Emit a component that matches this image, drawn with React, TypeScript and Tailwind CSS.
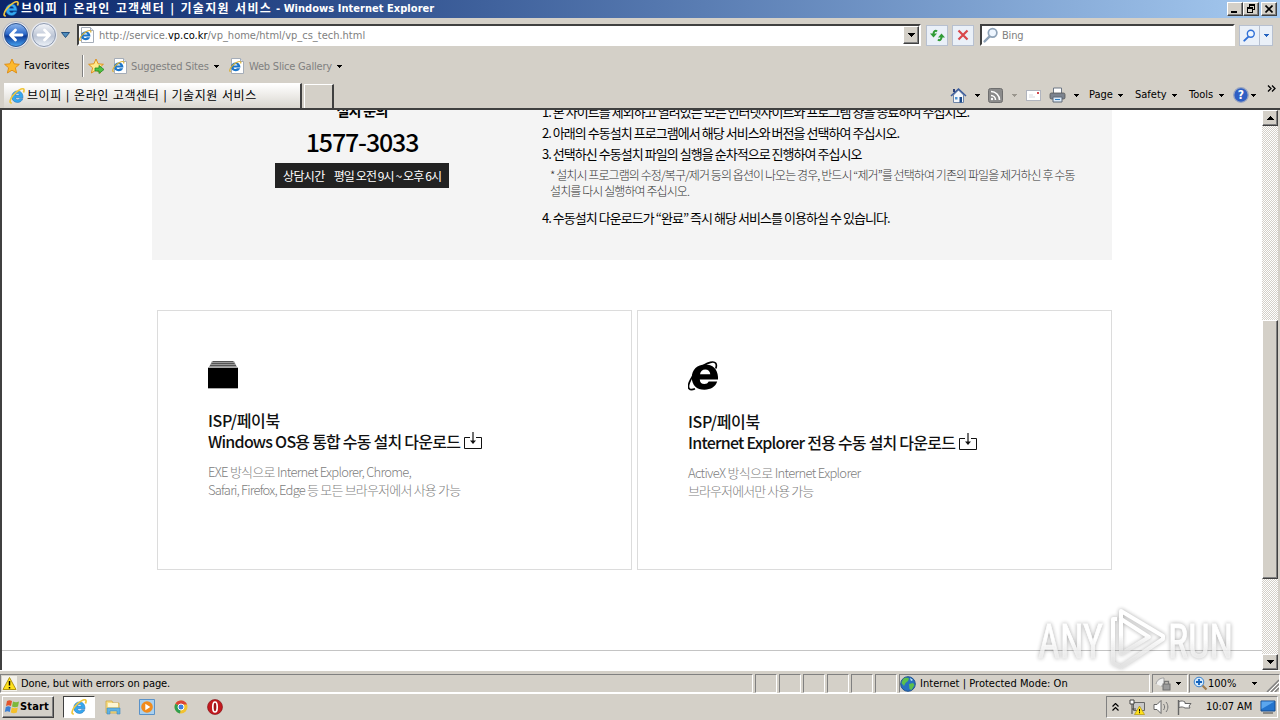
import type { ReactNode } from 'react';
import { clsx } from 'clsx';

const raised = 'border border-t-white border-l-white border-r-[#404040] border-b-[#404040] bg-[#d4d0c8] shadow-[inset_-1px_-1px_0_#808080]';
const sunken = 'border border-t-[#808080] border-l-[#808080] border-r-white border-b-white';

function Caret({ className = 'text-black' }: { className?: string }) {
    return (
        <svg width="5" height="3" viewBox="0 0 5 3" className={clsx('shrink-0', className)} shapeRendering="crispEdges">
            <path d="M0 0h5L2.5 3z" fill="currentColor" />
        </svg>
    );
}

function IeLogo({ size = 16 }: { size?: number }) {
    return (
        <svg width={size} height={size} viewBox="0 0 16 16" className="shrink-0">
            <path
                d="M14 9.800H6.400c.2 1.200 1 1.900 2.200 1.900.9 0 1.600-.3 2-1h3.200c-.8 2.300-2.700 3.800-5.300 3.800-3.300 0-5.700-2.400-5.700-5.700s2.400-5.900 5.700-5.900c3.400 0 5.600 2.600 5.500 6.900zM6.400 7.300h4.200C10.400 6.200 9.600 5.600 8.500 5.600S6.600 6.200 6.400 7.300z"
                fill="#35a8ef"
                stroke="#1566b4"
                strokeWidth=".5"
            />
            <path d="M2.800 14.700C.2 15.400.6 11.800 3.700 7.800 7.200 3.200 13.500-.6 14.800 1.300c.5.8.2 2-.4 3.200" fill="none" stroke="#f0c63c" strokeWidth="1.700" />
        </svg>
    );
}

function PageIcon() {
    return (
        <svg width="16" height="16" viewBox="0 0 16 16" className="shrink-0">
            <path d="M2.500.5h9l3 3v12h-12z" fill="#fff" stroke="#a5adb8" />
            <path d="M11.500.5v3h3" fill="#dde4ee" stroke="#a5adb8" />
            <path
                d="M11.500 9.400H4.600c.2 1.300.9 1.700 1.800 1.700.7 0 1.200-.3 1.500-.8h3.200c-.6 1.800-2.200 2.900-4.500 2.900-2.800 0-4.600-1.800-4.600-4.400s1.900-4.400 4.600-4.400c3 0 4.900 1.900 4.900 5zM4.700 7.500h3.800C8.300 6.700 7.600 6.200 6.600 6.200s-1.700.5-1.900 1.300z"
                fill="#1c76c9"
            />
            <path d="M1.800 13.500c-1.800.2-1.300-2.500 1-5.200 2.400-3 7.200-5.700 8.700-4.500.5.4.4 1.100.1 1.800" fill="none" stroke="#d8b13a" strokeWidth="1.200" />
        </svg>
    );
}

function Star({ add = false }: { add?: boolean }) {
    return (
        <svg width="17" height="17" viewBox="0 0 17 17" className="shrink-0">
            <path
                d="M8 1l2.100 4.800 5.300.5-4 3.500 1.200 5.200L8 12.200 3.400 15l1.200-5.200-4-3.500 5.300-.5z"
                fill={add ? '#ffe98a' : '#fdb92c'}
                stroke="#dd8a12"
                strokeWidth=".9"
                strokeLinejoin="round"
            />
            {add && <path d="M7 10h4V7.500l5 4-5 4V13H7z" fill="#4fc145" stroke="#258b22" strokeWidth=".8" />}
        </svg>
    );
}

function NavArrow({ back = false }: { back?: boolean }) {
    return (
        <svg width="26" height="26" viewBox="0 0 26 26" className="shrink-0">
            <defs>
                <linearGradient id="back" x1="0" y1="0" x2="0" y2="1">
                    <stop offset="0" stopColor="#8fb8ee" />
                    <stop offset=".45" stopColor="#2f6bcb" />
                    <stop offset=".55" stopColor="#0d3b9a" />
                    <stop offset="1" stopColor="#49a6f2" />
                </linearGradient>
                <linearGradient id="fwd" x1="0" y1="0" x2="0" y2="1">
                    <stop offset="0" stopColor="#f4f6fa" />
                    <stop offset=".55" stopColor="#bcc5d5" />
                    <stop offset="1" stopColor="#eef3fa" />
                </linearGradient>
            </defs>
            <circle cx="13" cy="13" r="11.500" fill={back ? 'url(#back)' : 'url(#fwd)'} stroke={back ? '#31548f' : '#8d99af'} />
            <path
                d={back ? 'M19 13H8M12.500 8L7.500 13l5 5' : 'M7 13h11M13.500 8l5 5-5 5'}
                fill="none"
                stroke="#fff"
                strokeWidth="2.800"
                strokeLinecap="round"
                strokeLinejoin="round"
            />
        </svg>
    );
}

function Magnifier({ color = '#2f6fd6', size = 15 }: { color?: string; size?: number }) {
    return (
        <svg width={size} height={size} viewBox="0 0 15 15" className="shrink-0">
            <path d="M1.500 13.500L6 9" stroke={color} strokeWidth="2.200" strokeLinecap="round" />
            <circle cx="9" cy="5.500" r="4" fill="#eef6ff" stroke={color} strokeWidth="1.600" />
        </svg>
    );
}

function TitleBar() {
    return (
        <div className="flex h-[18px] items-center bg-gradient-to-r from-[#0a246a] to-[#a6caf0] pl-[3px] pr-[3px] text-white">
            <IeLogo size={16} />
            <span className="ml-[2px] w-[252px] whitespace-nowrap text-[12px] font-bold tracking-[1.32px]">브이피 | 온라인 고객센터 | 기술지원 서비스</span>
            <span className="ml-[3px] whitespace-nowrap text-[11px] font-bold tracking-[0.04px]">- Windows Internet Explorer</span>
            <div className="ml-auto flex">
                <div className={clsx(raised, 'flex h-[14px] w-[16px] items-end justify-center pb-[2px]')}>
                    <div className="mr-[2px] h-[2px] w-[6px] bg-black" />
                </div>
                <div className={clsx(raised, 'flex h-[14px] w-[16px] items-center justify-center')}>
                    <svg width="10" height="10" viewBox="0 0 10 10" shapeRendering="crispEdges">
                        <path d="M3 0h6v6H7V5h1V2H4v1H3zM1 3h6v6H1zM2 5v3h4V5z" fillRule="evenodd" />
                    </svg>
                </div>
                <div className={clsx(raised, 'ml-[2px] flex h-[14px] w-[16px] items-center justify-center')}>
                    <svg width="8" height="8" viewBox="0 0 8 8">
                        <path d="M.5.5l7 7M7.500.5l-7 7" stroke="#000" strokeWidth="1.600" />
                    </svg>
                </div>
            </div>
        </div>
    );
}

function ToolButton({ children, className }: { children: ReactNode; className?: string }) {
    return (
        <div className={clsx('flex h-[21px] items-center justify-center border border-[#b7c0d0] bg-[#eaf0f8]', className)}>
            {children}
        </div>
    );
}

function AddressBar() {
    return (
        <div className="flex h-[34px] items-center bg-[#d4d0c8] pl-[3px] text-[11px]">
            <div className="flex rounded-full bg-[#e8ebf2] outline outline-[#b4b8c4]">
                <NavArrow back />
            </div>
            <div className="ml-[2px] flex rounded-full bg-[#e8ebf2]">
                <NavArrow />
            </div>
            <svg width="9" height="6" viewBox="0 0 9 6" className="ml-[4px]">
                <path d="M.5.5h8l-4 5z" fill="#4d8bbd" stroke="#24507e" />
            </svg>
            <div className="ml-[7px] flex h-[22px] w-[844px] items-center border-2 border-t-[#404040] border-l-[#404040] border-r-white border-b-white bg-white">
                <PageIcon />
                <span className="ml-[4px] grow whitespace-nowrap pt-[2px] tracking-[0px] text-[#808080]">
                    http://service.<span className="text-black">vp.co.kr</span>/vp_home/html/vp_cs_tech.html
                </span>
                <div className={clsx(raised, 'flex h-[18px] w-[16px] items-center justify-center')}>
                    <svg width="7" height="4" viewBox="0 0 7 4" shapeRendering="crispEdges"><path d="M0 0h7L3.500 4z" /></svg>
                </div>
            </div>
            <ToolButton className="ml-[5px] w-[22px]">
                <svg width="17" height="15" viewBox="0 0 17 15">
                    <path d="M8 3.500C6.500 2 4.500 3 4.500 6" fill="none" stroke="#2f9b35" strokeWidth="2" />
                    <path d="M1 5.500h7L4.500 9.500z" fill="#2f9b35" />
                    <path d="M9 11.500c1.500 1.500 3.500.5 3.500-2.500" fill="none" stroke="#2f9b35" strokeWidth="2" />
                    <path d="M9 9.500h7L12.500 5.500z" fill="#2f9b35" />
                </svg>
            </ToolButton>
            <ToolButton className="ml-[4px] w-[22px]">
                <svg width="12" height="12" viewBox="0 0 12 12"><path d="M1.500 1.500l9 9M10.500 1.500l-9 9" stroke="#d9474b" strokeWidth="2.200" /></svg>
            </ToolButton>
            <div className="ml-[6px] flex h-[22px] w-[255px] items-center border-2 border-t-[#404040] border-l-[#404040] border-r-white border-b-white bg-white pl-px text-[#808080]">
                <Magnifier color="#8fa3b8" size={16} />
                <span className="ml-[3px] pt-[2px] tracking-[-0.2px]">Bing</span>
            </div>
            <ToolButton className="ml-[4px] w-[21px]"><Magnifier size={13} /></ToolButton>
            <ToolButton className="-ml-px w-[14px]"><Caret className="text-[#2563c0]" /></ToolButton>
        </div>
    );
}

function FavoritesBar() {
    return (
        <div className="flex h-[28px] items-center bg-[#d4d0c8] pl-[4px] text-[11px]">
            <Star />
            <span className="ml-[3px] w-[46px] whitespace-nowrap pt-px tracking-[0.1px]">Favorites</span>
            <div className="ml-[12px] h-[22px] w-[2px] border-l border-[#808080] bg-white" />
            <div className="ml-[4px] flex"><Star add /></div>
            <div className="ml-[7px] flex"><PageIcon /></div>
            <span className="ml-[3px] w-[78px] whitespace-nowrap pt-[2px] tracking-[-0.15px] text-[#808080]">Suggested Sites</span>
            <div className="ml-[5px] flex"><Caret /></div>
            <div className="ml-[10px] flex"><PageIcon /></div>
            <span className="ml-[4px] w-[82px] whitespace-nowrap pt-[2px] tracking-[-0.2px] text-[#808080]">Web Slice Gallery</span>
            <div className="ml-[6px] flex"><Caret /></div>
        </div>
    );
}

function HomeIcon() {
    return (
        <svg width="17" height="17" viewBox="0 0 17 17" className="shrink-0">
            <path d="M3.500 8v7.500h10V8l-5-5z" fill="#f5f8fc" stroke="#7087a8" />
            <path d="M1 9l7.500-7L16 9" fill="none" stroke="#3b5c9c" strokeWidth="1.600" />
            <path d="M3 2h2v3H3z" fill="#2b3f78" />
            <path d="M9.500 10h2.500v5.500H9.500z" fill="#1c4b8c" />
            <path d="M5 10h2.500v2.500H5z" fill="#4f94d4" />
        </svg>
    );
}

function CommandBar() {
    return (
        <div className="flex h-[28px] border-b-2 border-[#404040] bg-[#d4d0c8] pl-[4px] pr-[4px]">
            <div className="mt-px flex h-[25px] w-[298px] items-center border-r-2 border-t border-r-[#404040] border-t-white bg-gradient-to-b from-white to-[#d9d6cf] pl-[5px]">
                <IeLogo size={16} />
                <span className="ml-[2px] whitespace-nowrap text-[12px] tracking-[0.57px]">브이피 | 온라인 고객센터 | 기술지원 서비스</span>
            </div>
            <div className="ml-[2px] mt-[2px] h-[24px] w-[30px] border-l border-r-2 border-t border-l-white border-r-[#404040] border-t-white" />
            <div className="ml-auto flex items-center text-[11px]">
                <HomeIcon />
                <div className="ml-[8px] flex"><Caret /></div>
                <svg width="15" height="15" viewBox="0 0 15 15" className="ml-[8px]">
                    <rect x=".5" y=".5" width="14" height="14" rx="2" fill="#8b8b8b" stroke="#6e6e6e" />
                    <path d="M3 7.500A4.500 4.500 0 0 1 7.500 12M3 3.500A8.500 8.500 0 0 1 11.500 12" fill="none" stroke="#fff" strokeWidth="1.600" />
                    <circle cx="4" cy="11" r="1.200" fill="#fff" />
                </svg>
                <div className="ml-[9px] flex"><Caret className="text-[#9a968e]" /></div>
                <svg width="15" height="11" viewBox="0 0 15 11" className="ml-[9px]">
                    <rect x=".5" y=".5" width="14" height="10" fill="#fff" stroke="#b0b4be" />
                    <rect x="11" y="2" width="2" height="2" fill="#d3484e" />
                    <path d="M3 7h6M3 5h4" stroke="#d4d7de" />
                </svg>
                <svg width="17" height="16" viewBox="0 0 17 16" className="ml-[8px]">
                    <path d="M4.500 6V1h8v5" fill="#fff" stroke="#6c7684" />
                    <rect x="1" y="6" width="15" height="6" rx="1.500" fill="#7c838e" stroke="#555" strokeWidth=".8" />
                    <path d="M4 10h9v5H4z" fill="#dcebfa" stroke="#5f6976" />
                    <path d="M6 12.500h5" stroke="#2f7fc2" />
                </svg>
                <div className="ml-[8px] flex"><Caret /></div>
                <span className="ml-[10px] w-[25px] whitespace-nowrap">Page</span>
                <div className="ml-[4px] flex"><Caret /></div>
                <span className="ml-[12px] w-[32px] whitespace-nowrap">Safety</span>
                <div className="ml-[5px] flex"><Caret /></div>
                <span className="ml-[12px] w-[26px] whitespace-nowrap">Tools</span>
                <div className="ml-[4px] flex"><Caret /></div>
                <svg width="16" height="16" viewBox="0 0 16 16" className="ml-[9px]">
                    <circle cx="8" cy="8" r="7.300" fill="#2f5fc4" stroke="#9aa6c0" strokeWidth="1.300" />
                    <text x="8" y="12.200" textAnchor="middle" fontSize="12" fontWeight="700" fill="#fff">?</text>
                </svg>
                <div className="ml-[2px] flex"><Caret /></div>
                <svg width="9" height="7" viewBox="0 0 9 7" className="mb-[13px] ml-[11px]">
                    <path d="M1 .5l3 3-3 3M5 .5l3 3-3 3" fill="none" stroke="#000" strokeWidth="1.300" />
                </svg>
            </div>
        </div>
    );
}

function DownloadIcon() {
    return (
        <svg width="18" height="17" viewBox="0 0 18 17" className="mb-[3px] ml-[4px]">
            <path d="M6 5.500H.5v11h17v-11H12" fill="none" stroke="#111" />
            <path d="M9 0v10" stroke="#111" strokeWidth="1.200" />
            <path d="M6 8.500h6l-3 3.500z" fill="#111" />
        </svg>
    );
}

function BlackIeLogo() {
    return (
        <svg width="30" height="30" viewBox="0 0 30 30">
            <path
                fillRule="evenodd"
                d="M30 18.500H11.800c.1 2.900 1.800 4.600 4.600 4.600 2 0 3.500-.8 4.300-2.500h8.500c-1.600 5-6.300 8.200-12.800 8.200C8.700 28.800 3.800 24 3.800 16.500 3.800 8.600 9.300 3.500 17.200 3.500 25.400 3.500 30.500 9 30 18.500zM12 13.300h10.300c-.3-3-2.200-4.700-5-4.700-2.900 0-4.800 1.700-5.300 4.700z"
            />
            <path d="M7 27.800c-5.500 2.400-8-.3-5.600-6.400C4.600 13 14 3.400 22.500 1.300c5.300-1.300 6.800 1.700 5.300 6.300" fill="none" stroke="#000" strokeWidth="1.700" />
        </svg>
    );
}

interface DownloadCardProps {
    icon: ReactNode;
    title: string;
    lines: ReactNode;
    className: string;
}

function DownloadCard({ icon, title, lines, className }: DownloadCardProps) {
    return (
        <div className={clsx('h-[260px] w-[475px] border border-[#dcdcdc] pl-[50px]', className)}>
            {icon}
            <h3 className="whitespace-nowrap text-[16px] font-medium leading-[21px] text-[#111]">
                <span className="block tracking-[-0.35px]">ISP/페이북</span>
                <span className="flex h-[21px] items-end">
                    <span className="tracking-[-0.77px]">{title}</span>
                    <DownloadIcon />
                </span>
            </h3>
            <p className="mt-[11px] whitespace-nowrap text-[13px] font-light leading-[18px] text-[#808080]">{lines}</p>
        </div>
    );
}

function WebPage() {
    return (
        <div className="flex h-[560px] grow flex-col overflow-hidden bg-white pl-[150px] font-['Noto_Sans_CJK_KR',sans-serif]">
            <section className="flex h-[150px] w-[960px] shrink-0 bg-[#f4f4f4]">
                <div className="-mt-[10px] flex w-[420px] flex-col items-center">
                    <span className="text-[14px] font-bold leading-[20px] tracking-[-0.7px]">설치 문의</span>
                    <span className="mt-[5px] text-[25px] font-medium leading-[32px] tracking-[-1.15px]">1577-3033</span>
                    <span className="mt-[6px] flex h-[25px] w-[174px] items-center justify-center gap-[9px] whitespace-nowrap bg-[#222] text-[12px] tracking-[-0.9px] text-white">
                        <span className="tracking-[-0.6px]">상담시간</span>
                        <span>평일 오전 9시 ~ 오후 6시</span>
                    </span>
                </div>
                <ol className="-mt-[9px] ml-[-30px] whitespace-nowrap text-[13px] leading-[21px] tracking-[-0.96px] text-black">
                    <li>1. 본 사이트를 제외하고 열려있는 모든 인터넷사이트와 프로그램 창을 종료하여 주십시오.</li>
                    <li>2. 아래의 수동설치 프로그램에서 해당 서비스와 버전을 선택하여 주십시오.</li>
                    <li>3. 선택하신 수동설치 파일의 실행을 순차적으로 진행하여 주십시오</li>
                    <li className="mt-[3px] pl-[8px] text-[12px] font-light leading-[16px] tracking-[-0.91px] text-[#333]">
                        * 설치시 프로그램의 수정/복구/제거 등의 옵션이 나오는 경우, 반드시 “제거”를 선택하여 기존의 파일을 제거하신 후 수동
                        <br />
                        설치를 다시 실행하여 주십시오.
                    </li>
                    <li className="mt-[8px]">4. 수동설치 다운로드가 “완료” 즉시 해당 서비스를 이용하실 수 있습니다.</li>
                </ol>
            </section>
            <section className="mt-[50px] flex gap-[5px] pl-[5px]">
                <DownloadCard
                    className="pt-[50px]"
                    icon={
                        <svg width="30" height="28" viewBox="0 0 30 28" className="mb-[21px]">
                            <path d="M4 0h22l3 6H1z" fill="#999" />
                            <path d="M5 .5h20M3.500 2.500h23M2 4.500h26" stroke="#555" />
                            <path d="M0 6h30v22H0z" fill="#aaa" />
                            <path d="M0 7h30v20H0z" />
                        </svg>
                    }
                    title="Windows OS용 통합 수동 설치 다운로드"
                    lines={
                        <>
                            <span className="block tracking-[-0.73px]">EXE 방식으로 Internet Explorer, Chrome,</span>
                            <span className="block tracking-[-0.8px]">Safari, Firefox, Edge 등 모든 브라우저에서 사용 가능</span>
                        </>
                    }
                />
                <DownloadCard
                    className="pt-[50px]"
                    icon={<div className="mb-[20px] h-[30px]"><BlackIeLogo /></div>}
                    title="Internet Explorer 전용 수동 설치 다운로드"
                    lines={
                        <>
                            <span className="block tracking-[-0.7px]">ActiveX 방식으로 Internet Explorer</span>
                            <span className="block tracking-[-0.92px]">브라우저에서만 사용 가능</span>
                        </>
                    }
                />
            </section>
            <div className="-ml-[150px] mt-[80px] border-t border-[#c4c4c4]" />
        </div>
    );
}

function ScrollBar() {
    return (
        <div className="flex h-[560px] w-[16px] shrink-0 flex-col bg-[repeating-conic-gradient(#d4d0c8_0_25%,#fff_0_50%)] bg-[length:2px_2px]">
            <div className={clsx(raised, 'flex h-[16px] items-center justify-center')}>
                <svg width="7" height="4" viewBox="0 0 7 4" shapeRendering="crispEdges"><path d="M3.500 0L7 4H0z" /></svg>
            </div>
            <div className={clsx(raised, 'mt-[194px] h-[259px]')} />
            <div className={clsx(raised, 'mt-auto flex h-[16px] items-center justify-center')}>
                <svg width="7" height="4" viewBox="0 0 7 4" shapeRendering="crispEdges"><path d="M0 0h7L3.500 4z" /></svg>
            </div>
        </div>
    );
}

function StatusBar() {
    return (
        <div className="flex h-[19px] bg-[#d4d0c8] text-[11px]">
            <div className={clsx(sunken, 'flex w-[753px] items-center gap-[4px] pl-px')}>
                <svg width="15" height="15" viewBox="0 0 15 15">
                    <path d="M0 0h15v15H0z" fill="#f3f1ea" />
                    <path d="M7.500 1.500l6.500 12H1z" fill="#ffe11a" stroke="#b09410" />
                    <path d="M7.500 5v4.500M7.500 11v1.500" stroke="#000" strokeWidth="1.500" />
                </svg>
                <span className="pt-px tracking-[-0.08px]">Done, but with errors on page.</span>
            </div>
            {[0, 1, 2, 3, 4, 5].map(i => (
                <div key={i} className={clsx(sunken, 'ml-[2px] w-[22px]')} />
            ))}
            <div className={clsx(sunken, 'ml-[2px] flex w-[251px] items-center')}>
                <svg width="16" height="16" viewBox="0 0 16 16">
                    <circle cx="8" cy="8" r="7.300" fill="#2770c0" stroke="#1f518e" />
                    <path d="M3 3c2-2 5-1.500 6-.5L8 5 5.500 7 4 10 1.500 7zM9 8l4-1 1.500 2-3 5-2-1z" fill="#5cc04b" />
                    <path d="M10 2l3 2-2 1z" fill="#cdeaf8" />
                </svg>
                <span className="ml-[4px] whitespace-nowrap pt-px tracking-[0.03px]">Internet | Protected Mode: On</span>
            </div>
            <div className={clsx(sunken, 'ml-[2px] flex w-[36px] items-center')}>
                <svg width="16" height="15" viewBox="0 0 16 15" className="ml-[2px]">
                    <path d="M1 8c1-4 4-6 8-6v8H6" fill="#f0f0f0" stroke="#a0a0a0" />
                    <rect x="8" y="8" width="7" height="6" fill="#9b9b9b" stroke="#6f6f6f" />
                    <path d="M9.500 8V5.500h4V8" fill="none" stroke="#777" strokeWidth="1.300" />
                </svg>
                <div className="ml-[5px] flex"><Caret /></div>
            </div>
            <div className={clsx(sunken, 'ml-px flex w-[91px] items-center pl-[3px]')}>
                <svg width="15" height="15" viewBox="0 0 15 15">
                    <path d="M9 9l4.500 4.500" stroke="#a07c50" strokeWidth="2.200" />
                    <circle cx="6" cy="6" r="4.800" fill="#d5e9fb" stroke="#3b82cc" />
                    <path d="M6 3v6M3 6h6" stroke="#1664bd" strokeWidth="1.800" />
                </svg>
                <span className="w-[32px] pt-px tracking-[0px]">100%</span>
                <div className="ml-[12px] flex"><Caret /></div>
                <svg width="13" height="13" viewBox="0 0 13 13" className="ml-auto mt-[4px]">
                    <path d="M1 13L13 1M5 13l8-8M9 13l4-4" stroke="#808080" strokeWidth="1.500" />
                    <path d="M3 13L13 3M7 13l6-6" stroke="#fff" />
                </svg>
            </div>
        </div>
    );
}

function TaskBar() {
    return (
        <div className="flex h-[27px] items-center border-t border-white bg-[#d4d0c8] pl-[2px] text-[11px]">
            <div className={clsx(raised, 'flex h-[22px] w-[52px] items-center pl-px')}>
                <svg width="16" height="16" viewBox="0 0 16 16" className="shrink-0">
                    <path d="M3 2c2-1 3-1 5 0L7 7C5 6 4 6 2 7z" fill="#e2542c" />
                    <path d="M9 2.500c2 1 4 1 6 0L14 7.500c-2 1-4 1-6 0z" fill="#7cb83a" />
                    <path d="M1.800 8c2-1 3-1 5 0l-1 5c-2-1-3-1-5 0z" fill="#3a7fd4" />
                    <path d="M7.800 8.500c2 1 4 1 6 0l-1 5c-2 1-4 1-6 0z" fill="#f5c02a" />
                </svg>
                <span className="pt-px font-bold tracking-[0.15px]">Start</span>
            </div>
            <div className="ml-[9px] flex h-[22px] w-[32px] items-center justify-center border border-t-[#404040] border-l-[#404040] border-r-white border-b-white bg-white">
                <IeLogo size={16} />
            </div>
            <svg width="16" height="16" viewBox="0 0 16 16" className="ml-[10px]">
                <path d="M1 2h6l1 2h6v10H1z" fill="#f7dd84" stroke="#cfa945" strokeWidth=".8" />
                <path d="M3 4h10v4H3z" fill="#fdf6d2" />
                <path d="M2 9h13v6h-3v-3H5v3H2z" fill="#5eb3e4" stroke="#3c88bd" strokeWidth=".6" />
            </svg>
            <svg width="16" height="16" viewBox="0 0 16 16" className="ml-[18px]">
                <path d="M.5.5h15v15H.5z" fill="#a9d0ef" stroke="#5a92c8" />
                <circle cx="8" cy="8" r="5.800" fill="#f18b1c" />
                <path d="M6.300 4.800l5 3.200-5 3.200z" fill="#fff" />
            </svg>
            <svg width="14" height="14" viewBox="0 0 14 14" className="ml-[19px]">
                <circle cx="7" cy="7" r="6.500" fill="#f2c230" />
                <path d="M7 7L1.400 3.700A6.500 6.500 0 0 1 13 4.500H7z" fill="#dc4437" />
                <path d="M7 7l-1 6.400A6.500 6.500 0 0 1 1.400 3.700z" fill="#2f9e50" />
                <circle cx="7" cy="7" r="3" fill="#3f7fe0" stroke="#fff" />
            </svg>
            <svg width="16" height="16" viewBox="0 0 16 16" className="ml-[19px]">
                <circle cx="8" cy="8" r="7.500" fill="#c3191f" stroke="#7c0c10" strokeWidth=".6" />
                <ellipse cx="8" cy="8" rx="2.200" ry="5" fill="#a01218" stroke="#fff" strokeWidth="1.700" />
            </svg>
            <div className={clsx(sunken, 'ml-auto mr-[2px] flex h-[22px] w-[172px] items-center')}>
                <svg width="7" height="8" viewBox="0 0 7 8" className="ml-[5px]">
                    <path d="M.5 3.500l3-3 3 3M.5 7.500l3-3 3 3" fill="none" stroke="#000" strokeWidth="1.200" />
                </svg>
                <svg width="16" height="16" viewBox="0 0 16 16" className="ml-[10px]">
                    <path d="M4.500 3.500h11v8h-11z" fill="#c8c8c8" stroke="#666" />
                    <path d="M1 1h4v4H1zM3 5v10M3 10h4" fill="#fff" stroke="#444" />
                    <path d="M10.500 7l5 8.500h-10z" fill="#ffe11a" stroke="#b09410" strokeWidth=".7" />
                    <path d="M10.500 10v2.500M10.500 13.200v1" stroke="#000" />
                </svg>
                <svg width="17" height="16" viewBox="0 0 17 16" className="ml-[8px]">
                    <path d="M1 5.500h3l4-4v13l-4-4H1z" fill="#fff" stroke="#666" />
                    <path d="M10.500 5c1.500 2 1.500 4 0 6M13 3c2.500 3 2.500 7 0 10" fill="none" stroke="#777" />
                </svg>
                <svg width="16" height="16" viewBox="0 0 16 16" className="ml-[7px]">
                    <path d="M1.500 1v15" stroke="#666" strokeWidth="1.400" />
                    <path d="M2 2.500c3-1 4-.5 6 .5v1.500h6l-2 2.500 1 2H8C6 8 5 7.500 2 8.500z" fill="#fff" stroke="#666" />
                </svg>
                <span className="ml-[13px] w-[48px] whitespace-nowrap pt-px tracking-[-0.1px]">10:07 AM</span>
                <svg width="16" height="14" viewBox="0 0 16 14" className="ml-[6px] shrink-0">
                    <path d="M1 1h14v10H1z" fill="#2374ce" stroke="#164a8c" />
                    <path d="M1.500 1.500h13L1.500 9z" fill="#5ba6ee" />
                    <path d="M3 13h10" stroke="#444" />
                </svg>
            </div>
        </div>
    );
}

function Watermark() {
    return (
        <svg width="210" height="76" viewBox="0 0 210 76" className="absolute left-[1030px] top-[602px] opacity-90 drop-shadow-[0_0_2px_rgba(0,0,0,0.38)]">
            <defs>
                <linearGradient id="fade" x1="0" y1="0" x2="0" y2="1">
                    <stop offset="0" stopColor="#fff" />
                    <stop offset=".45" stopColor="#fff" />
                    <stop offset="1" stopColor="#e2e2e2" stopOpacity=".7" />
                </linearGradient>
            </defs>
            <g fill="url(#fade)" stroke="url(#fade)" strokeWidth=".8" fontFamily="Roboto, sans-serif" fontSize="48" fontWeight="400">
                <text x="8" y="56" textLength="65" lengthAdjust="spacingAndGlyphs">ANY</text>
                <text x="138" y="56" textLength="65" lengthAdjust="spacingAndGlyphs">RUN</text>
            </g>
            <g fill="none" stroke="url(#fade)" strokeWidth="4" strokeLinejoin="round">
                <path d="M91 16V9l42 25v3L91 65l-8-4V17h4" />
                <path d="M91 17v35l28-17z" />
            </g>
        </svg>
    );
}

export default function App() {
    return (
        <div className="relative flex h-[720px] w-[1280px] flex-col overflow-hidden bg-[#d4d0c8] font-['DejaVu_Sans_Condensed','DejaVu_Sans','Noto_Sans_CJK_KR',sans-serif] text-black font-stretch-condensed">
            <TitleBar />
            <AddressBar />
            <FavoritesBar />
            <div className="h-[2px]" />
            <CommandBar />
            <div className="flex h-[560px] border-l-2 border-[#404040] pr-[2px]">
                <WebPage />
                <ScrollBar />
            </div>
            <div className="h-[4px] border-t border-white" />
            <StatusBar />
            <TaskBar />
            <Watermark />
        </div>
    );
}
